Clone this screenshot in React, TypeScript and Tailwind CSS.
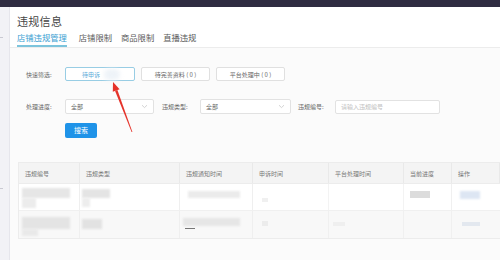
import React from 'react';

const font = { fontFamily: '"Noto Sans CJK SC", "Noto Sans", sans-serif' };

const tabs = ['店铺违规管理', '店铺限制', '商品限制', '直播违规'];

const columns = [
  { title: '违规编号', w: 'w-[61px]' },
  { title: '违规类型', w: 'w-[100px]' },
  { title: '违规通知时间', w: 'w-[73px]' },
  { title: '申诉时间', w: 'w-[76px]' },
  { title: '平台处理时间', w: 'w-[75px]' },
  { title: '当前进度', w: 'w-[48px]' },
  { title: '操作', w: 'flex-1' },
];

const Chevron: React.FC = () => (
  <svg width="7" height="5" viewBox="0 0 7 5" className="text-[#c8c8c8]">
    <path d="M1 1.2 L3.5 3.6 L6 1.2" fill="none" stroke="currentColor" strokeWidth="0.8" />
  </svg>
);

const Select: React.FC<{ w: string }> = ({ w }) => (
  <div className={`${w} h-[15px] bg-white border border-[#e2e2e2] rounded-[2px] flex items-center justify-between pl-[5px] pr-[5px]`}>
    <span className="text-[6px] text-[#666]">全部</span>
    <Chevron />
  </div>
);

const App: React.FC = () => {
  return (
    <div className="w-[500px] h-[260px] overflow-hidden relative flex flex-col bg-[#f3f3f6]" style={font}>
      <div className="h-[7px] bg-[#2f2c41] shrink-0" />
      <div className="flex flex-1 min-h-0">
        {/* left gutter */}
        <div className="w-[10px] shrink-0 bg-[#f2f2f6] border-r border-[#e6e6ec] flex flex-col">
          <div className="mt-[30px] w-[3px] h-[1px] bg-[#c9c9d2]" />
          <div className="mt-[150px] w-[3px] h-[1px] bg-[#c9c9d2]" />
        </div>

        <div className="flex-1 min-w-0 flex flex-col bg-[#fbfbfb]">
          {/* header */}
          <div className="bg-white border-b border-[#ececec] pl-[7px] pt-[7px]">
            <h1 className="text-[11px] leading-[14px] text-[#444] tracking-[0.3px]">违规信息</h1>
            <div className="flex mt-[3px]">
              {tabs.map((t, i) => (
                <div
                  key={t}
                  className={`text-[8.3px] leading-[12px] pb-[2px] ${i === 0 ? 'text-[#3a9ed2] border-b-[2px] border-[#7cc4dc] mr-[12px]' : 'text-[#5a5a5a] border-b-[2px] border-transparent mr-[9px]'}`}
                >
                  {t}
                </div>
              ))}
            </div>
          </div>

          {/* filters */}
          <div className="pl-[16px] pt-[19px] text-[6px] text-[#666]">
            <div className="flex items-center">
              <span className="w-[39px]">快速筛选:</span>
              <div className="w-[70px] h-[14px] border border-[#98cde4] bg-white rounded-[2px] flex items-center pl-[16px] relative">
                <span className="text-[#5aaad8]">待申诉</span>
                <div className="absolute left-[38px] top-[1px] w-[16px] h-[11px] rounded-full bg-[#eef3f8] blur-[2px]" />
              </div>
              <div className="ml-[6px] w-[69px] h-[14px] border border-[#e0e0e0] bg-white rounded-[2px] flex items-center justify-center">
                待完善资料 ( 0 )
              </div>
              <div className="ml-[6px] w-[69px] h-[14px] border border-[#e0e0e0] bg-white rounded-[2px] flex items-center justify-center">
                平台处理中 ( 0 )
              </div>
            </div>

            <div className="flex items-center mt-[18px]">
              <span className="w-[39px]">处理进度:</span>
              <Select w="w-[89px]" />
              <span className="ml-[8px] w-[38px]">违规类型:</span>
              <Select w="w-[91px]" />
              <span className="ml-[7px] w-[37px]">违规编号:</span>
              <div className="w-[105px] h-[14px] bg-white border border-[#e2e2e2] rounded-[2px] flex items-center pl-[5px] text-[#c0c0c0]">
                请输入违规编号
              </div>
            </div>

            <div className="ml-[39px] mt-[9px] w-[32px] h-[15px] bg-[#1f93e8] rounded-[2px] flex items-center justify-center text-white text-[7px]">
              搜索
            </div>
          </div>

          {/* table */}
          <div className="mt-[24px] ml-[8px] bg-white border-t border-l border-[#ececec] text-[6px] text-[#777]">
            <div className="flex h-[21px] bg-[#f4f4f4] border-b border-[#ececec]">
              {columns.map((c) => (
                <div key={c.title} className={`${c.w} shrink-0 border-r border-[#e9e9e9] flex items-center pl-[6px]`}>
                  {c.title}
                </div>
              ))}
            </div>

            {/* row 1 */}
            <div className="flex h-[27px] bg-white border-b border-[#f0f0f0]">
              <div className="w-[61px] shrink-0 border-r border-[#efefef] pl-[3px] pt-[4px]">
                <div className="w-[48px] h-[10px] bg-[#e6e6e6] blur-[1px]" />
                <div className="w-[14px] h-[10px] bg-[#ececec] blur-[1px]" />
              </div>
              <div className="w-[100px] shrink-0 border-r border-[#efefef] pl-[2px] pt-[5px]">
                <div className="w-[28px] h-[9px] bg-[#e4e4e4] blur-[1px]" />
                <div className="w-[8px] h-[9px] bg-[#ededed] blur-[1px]" />
              </div>
              <div className="w-[73px] shrink-0 border-r border-[#efefef] pl-[8px] pt-[7px]">
                <div className="w-[52px] h-[7px] bg-[#ebebeb] blur-[1px]" />
              </div>
              <div className="w-[76px] shrink-0 border-r border-[#f3f3f3] pl-[9px] pt-[14px]">
                <div className="w-[6px] h-[4px] bg-[#f0f0f0]" />
              </div>
              <div className="w-[75px] shrink-0 border-r border-[#f3f3f3]" />
              <div className="w-[48px] shrink-0 border-r border-[#f0f0f0] pl-[6px] pt-[7px]">
                <div className="w-[20px] h-[7px] bg-[#dcdcdc] blur-[0.5px]" />
              </div>
              <div className="flex-1 pl-[8px] pt-[7px]">
                <div className="w-[20px] h-[8px] bg-[#dde6f3] blur-[1px]" />
              </div>
            </div>

            {/* row 2 */}
            <div className="flex h-[28px] bg-[#f8f8f8] border-b border-[#ececec]">
              <div className="w-[61px] shrink-0 border-r border-[#efefef] pl-[3px] pt-[6px]">
                <div className="w-[48px] h-[12px] bg-[#e4e4e4] blur-[1px]" />
                <div className="w-[16px] h-[7px] bg-[#e9e9e9] blur-[1px]" />
              </div>
              <div className="w-[100px] shrink-0 border-r border-[#efefef] pl-[2px] pt-[8px]">
                <div className="w-[20px] h-[10px] bg-[#e2e2e2] blur-[1px]" />
              </div>
              <div className="w-[73px] shrink-0 border-r border-[#efefef] pl-[3px] pt-[7px]">
                <div className="w-[57px] h-[8px] bg-[#e6e6e6] blur-[1px]" />
                <div className="mt-[2px] ml-[2px] w-[10px] h-[1px] bg-[#777]" />
              </div>
              <div className="w-[76px] shrink-0 border-r border-[#f0f0f0] pl-[9px] pt-[10px]">
                <div className="w-[6px] h-[5px] bg-[#ececec]" />
              </div>
              <div className="w-[75px] shrink-0 border-r border-[#f0f0f0] pl-[4px] pt-[11px]">
                <div className="w-[12px] h-[4px] bg-[#efefef]" />
              </div>
              <div className="w-[48px] shrink-0 border-r border-[#f0f0f0]" />
              <div className="flex-1 pl-[10px] pt-[11px]">
                <div className="w-[18px] h-[4px] bg-[#e3e8ef] blur-[0.5px]" />
              </div>
            </div>
          </div>
        </div>
      </div>

      {/* red annotation arrow */}
      <svg className="absolute left-0 top-0 pointer-events-none" width="500" height="260" viewBox="0 0 500 260">
        <polygon points="113,82 119.6,89.3 112.8,91.7" fill="#e5332a" />
        <polygon points="117.4,90 115,90.8 131.6,132.1 132.4,131.9" fill="#e5332a" />
      </svg>
    </div>
  );
};

export default App;
